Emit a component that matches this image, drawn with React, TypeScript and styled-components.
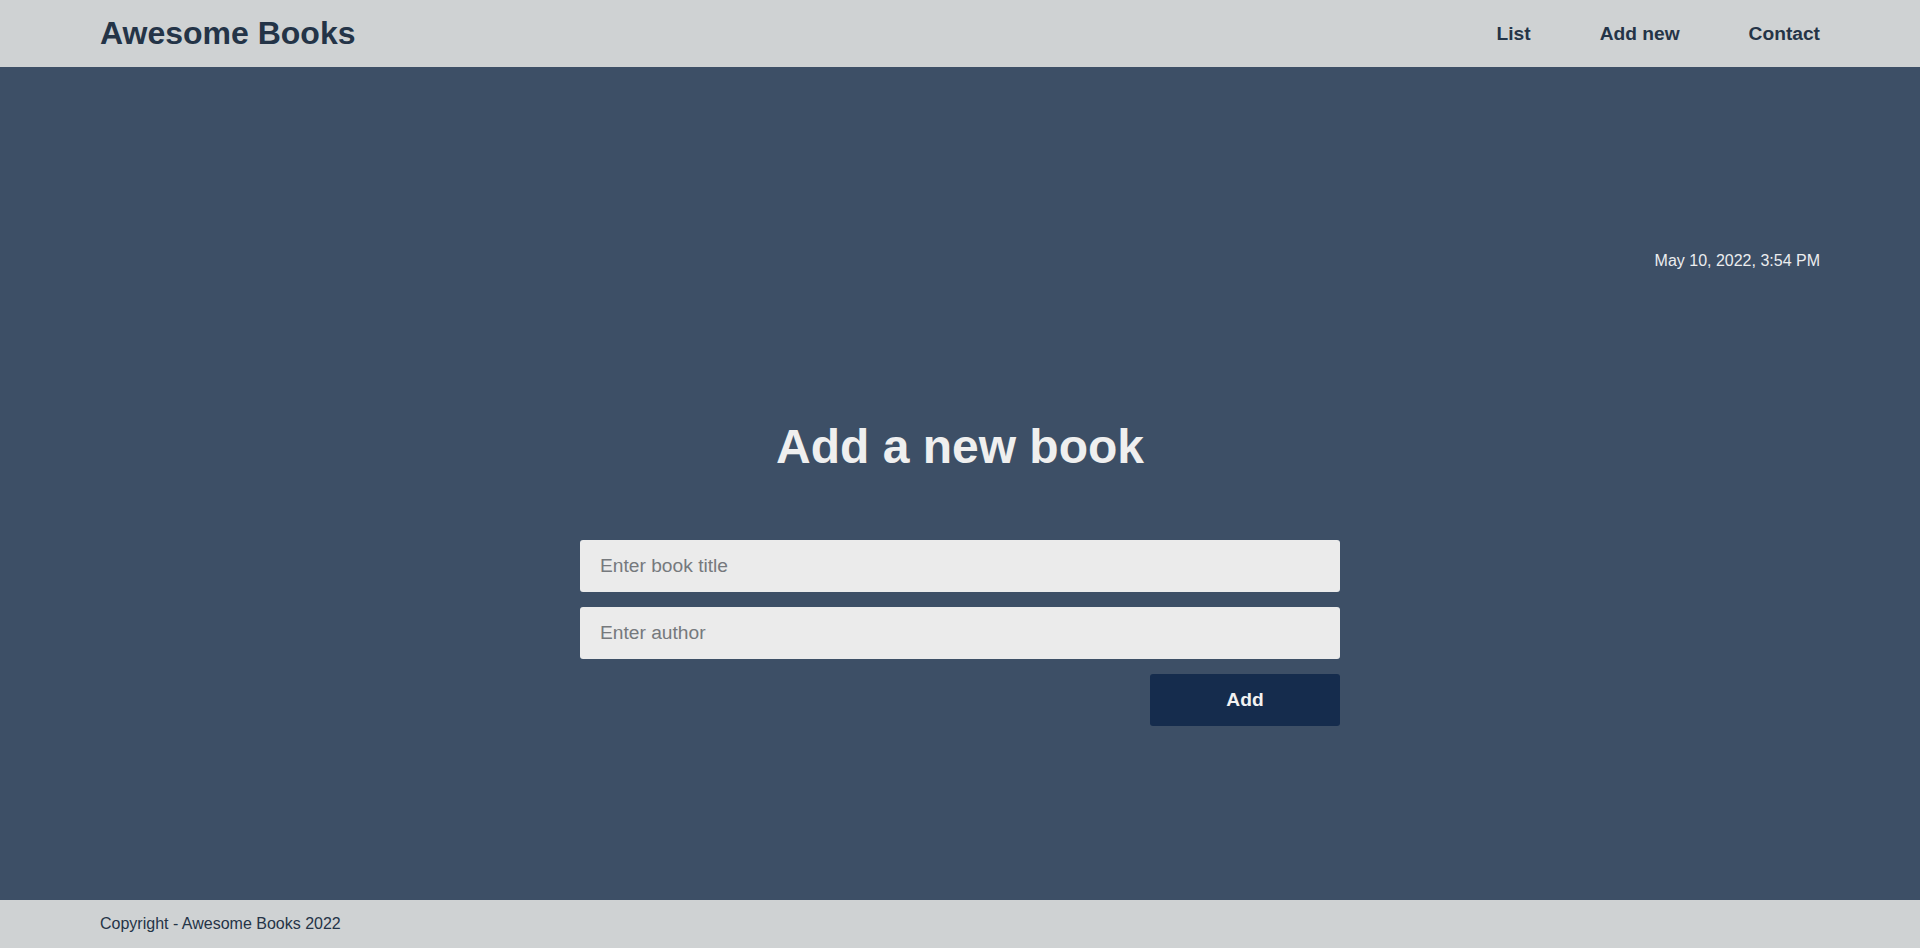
import React from "react";
import styled, { createGlobalStyle } from "styled-components";

const GlobalStyle = createGlobalStyle`
  * { box-sizing: border-box; }
  html, body { margin: 0; padding: 0; }
  body {
    font-family: "Liberation Sans", Arial, sans-serif;
    background: #3d4f66;
  }
`;

const Page = styled.div`
  min-height: 100vh;
  display: flex;
  flex-direction: column;
`;

const Header = styled.header`
  height: 67px;
  background: #cfd2d3;
  display: flex;
  align-items: center;
  justify-content: space-between;
  padding: 0 100px;
`;

const Brand = styled.h1`
  margin: 0;
  font-size: 32px;
  font-weight: 700;
  color: #243447;
`;

const Nav = styled.nav`
  display: flex;
  align-items: center;
  gap: 69px;
  padding-top: 1px;
`;

const NavLink = styled.a`
  font-size: 19.2px;
  font-weight: 700;
  color: #243447;
  text-decoration: none;
  cursor: pointer;
`;

const Main = styled.main`
  flex: 1;
  padding: 185px 100px 0;
  display: flex;
  flex-direction: column;
`;

const DateLine = styled.p`
  margin: 0;
  text-align: right;
  font-size: 16px;
  color: #ecedef;
`;

const Section = styled.section`
  display: flex;
  flex-direction: column;
  align-items: center;
  margin-top: 149px;
`;

const Heading = styled.h2`
  margin: 0;
  font-size: 48px;
  font-weight: 700;
  color: #efefef;
`;

const Form = styled.form`
  width: 760px;
  margin-top: 66px;
  display: flex;
  flex-direction: column;
  gap: 15px;
`;

const Input = styled.input`
  height: 52px;
  width: 100%;
  border: none;
  border-radius: 3px;
  background: #ebebeb;
  padding: 0 20px;
  font-family: "Liberation Sans", Arial, sans-serif;
  font-size: 19.2px;
  color: #333;
  outline: none;
  &::placeholder {
    color: #76797d;
  }
`;

const ButtonRow = styled.div`
  display: flex;
  justify-content: flex-end;
`;

const AddButton = styled.button`
  width: 190px;
  height: 52px;
  border: none;
  border-radius: 3px;
  background: #152c4d;
  color: #f2f2f2;
  font-family: "Liberation Sans", Arial, sans-serif;
  font-size: 19.2px;
  font-weight: 700;
  cursor: pointer;
`;

const Footer = styled.footer`
  height: 48px;
  background: #cfd2d3;
  display: flex;
  align-items: center;
  padding: 0 100px;
`;

const FooterText = styled.p`
  margin: 0;
  font-size: 16px;
  color: #253447;
`;

export default function App() {
  return (
    <>
      <GlobalStyle />
      <Page>
        <Header>
          <Brand>Awesome Books</Brand>
          <Nav>
            <NavLink>List</NavLink>
            <NavLink>Add new</NavLink>
            <NavLink>Contact</NavLink>
          </Nav>
        </Header>
        <Main>
          <DateLine>May 10, 2022, 3:54 PM</DateLine>
          <Section>
            <Heading>Add a new book</Heading>
            <Form onSubmit={(e) => e.preventDefault()}>
              <Input type="text" placeholder="Enter book title" />
              <Input type="text" placeholder="Enter author" />
              <ButtonRow>
                <AddButton type="submit">Add</AddButton>
              </ButtonRow>
            </Form>
          </Section>
        </Main>
        <Footer>
          <FooterText>Copyright - Awesome Books 2022</FooterText>
        </Footer>
      </Page>
    </>
  );
}
